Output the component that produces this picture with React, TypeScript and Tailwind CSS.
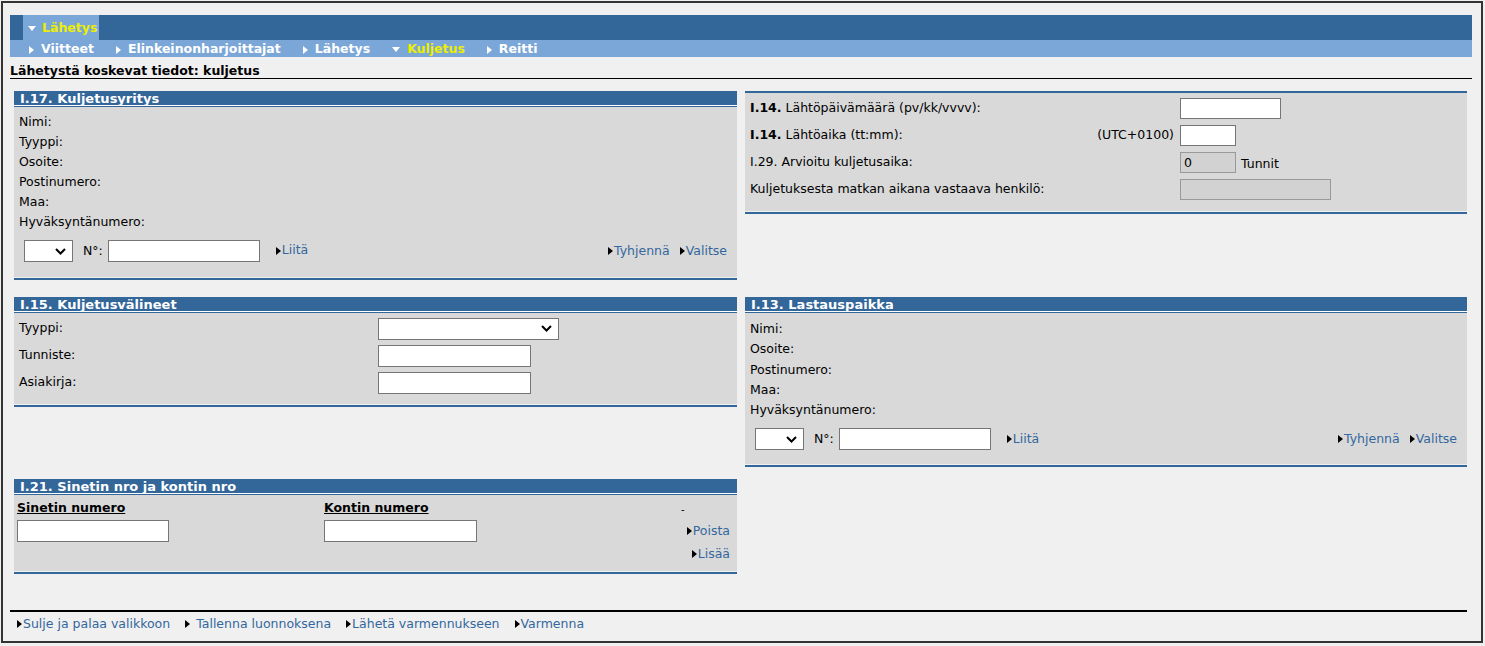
import React from 'react';

const RightTri = ({ className = 'fill-black' }: { className?: string }) => (
  <svg width="5" height="8" viewBox="0 0 5 8" className={className}>
    <path d="M0 0L5 4L0 8Z" />
  </svg>
);

const NavRightTri = () => (
  <svg width="5" height="8" viewBox="0 0 5 8" className="fill-white">
    <path d="M0 0L5 4L0 8Z" />
  </svg>
);

const NavDownTri = () => (
  <svg width="8" height="5" viewBox="0 0 8 5" className="fill-white">
    <path d="M0 0H8L4 5Z" />
  </svg>
);

const Chevron = () => (
  <svg width="11" height="7" viewBox="0 0 11 7" fill="none" stroke="#000" strokeWidth="2">
    <path d="M1 1L5.5 5.5L10 1" />
  </svg>
);

const Link = ({ children, spaced = false }: { children: React.ReactNode; spaced?: boolean }) => (
  <a className={`inline-flex items-center cursor-pointer text-[#33679d] ${spaced ? 'gap-[6px]' : 'gap-[1px]'}`}>
    <RightTri />
    <span>{children}</span>
  </a>
);

const SelectBox = ({ width }: { width: string }) => (
  <div className={`${width} h-[22px] border border-[#767676] bg-white flex items-center justify-end pr-[6px]`}>
    <Chevron />
  </div>
);

const SectionHeader = ({ title }: { title: string }) => (
  <div>
    <div className="h-[14px] bg-[#336699] pl-[6px] text-white font-bold text-[13px] leading-[15px]">{title}</div>
    <div className="h-px bg-white" />
    <div className="h-px bg-[#336699]" />
  </div>
);

const SectionBottom = () => (
  <div>
    <div className="h-px bg-[#f0f0f0]" />
    <div className="h-[2px] bg-[#336699]" />
  </div>
);

const PartyFooterRow = () => (
  <div className="mt-[8px] h-[22px] flex items-center pl-[10px] pr-[10px]">
    <SelectBox width="w-[49px]" />
    <span className="ml-[10px]">N°:</span>
    <input className="ml-[5px] w-[152px] h-[22px] border border-[#767676] bg-white" />
    <span className="ml-[16px]">
      <Link>Liitä</Link>
    </span>
    <div className="ml-auto flex gap-[10px]">
      <Link>Tyhjennä</Link>
      <Link>Valitse</Link>
    </div>
  </div>
);

const navItems = [
  { label: 'Viitteet', active: false },
  { label: 'Elinkeinonharjoittajat', active: false },
  { label: 'Lähetys', active: false },
  { label: 'Kuljetus', active: true },
  { label: 'Reitti', active: false },
];

export default function App() {
  return (
    <div className="min-h-screen bg-[#f0f0f0] pt-px pl-px font-['DejaVu_Sans',sans-serif] text-[12.5px] text-black">
      <div className="w-[1482px] h-[642px] border-2 border-[#333333] pl-[7px] pr-[9px] pt-[12px]">
        {/* top tab bar */}
        <div className="h-[25px] bg-[#336699] flex">
          <div className="ml-[13px] w-[76px] bg-[#7aa7d7] flex items-center pl-[5px] pt-[2px] gap-[6px]">
            <NavDownTri />
            <span className="font-bold text-[#eeee00] text-[12.5px]">Lähetys</span>
          </div>
        </div>
        {/* sub navigation */}
        <div className="h-[17px] bg-[#7aa7d7] flex items-center pl-[19px] pt-[2px] gap-[22px]">
          {navItems.map((item) => (
            <div key={item.label} className="flex items-center gap-[7px]">
              {item.active ? <NavDownTri /> : <NavRightTri />}
              <span className={`font-bold text-[12.5px] ${item.active ? 'text-[#eeee00]' : 'text-white'}`}>{item.label}</span>
            </div>
          ))}
        </div>
        {/* page title */}
        <div className="pt-[6px] leading-[15px] font-bold text-[12.5px] border-b border-black">
          Lähetystä koskevat tiedot: kuljetus
        </div>

        <div className="grid grid-cols-[723px_722px] gap-x-[8px] items-start ml-[4px] mt-[12px]">
          {/* I.17 */}
          <div>
            <SectionHeader title="I.17. Kuljetusyritys" />
            <div className="bg-[#d9d9d9] pt-[5px] pb-[15px]">
              <div className="pl-[5px] leading-[20px]">
                <div>Nimi:</div>
                <div>Tyyppi:</div>
                <div>Osoite:</div>
                <div>Postinumero:</div>
                <div>Maa:</div>
                <div>Hyväksyntänumero:</div>
              </div>
              <PartyFooterRow />
            </div>
            <SectionBottom />
          </div>

          {/* I.14 */}
          <div>
            <div className="h-[2px] bg-[#336699]" />
            <div className="bg-[#d9d9d9] pt-[2px] pb-[8px]">
              <div className="h-[27px] flex items-center">
                <div className="w-[435px] pl-[5px]">
                  <b>I.14.</b> Lähtöpäivämäärä (pv/kk/vvvv):
                </div>
                <input className="w-[101px] h-[21px] border border-[#767676] bg-white" />
              </div>
              <div className="h-[27px] flex items-center">
                <div className="w-[435px] pl-[5px] pr-[6px] flex justify-between">
                  <span>
                    <b>I.14.</b> Lähtöaika (tt:mm):
                  </span>
                  <span>(UTC+0100)</span>
                </div>
                <input className="w-[56px] h-[21px] border border-[#767676] bg-white" />
              </div>
              <div className="h-[27px] flex items-center">
                <div className="w-[435px] pl-[5px]">I.29. Arvioitu kuljetusaika:</div>
                <div className="w-[56px] h-[21px] border border-[#999999] bg-[#d2d2d2] pl-[3px] leading-[19px]">0</div>
                <span className="ml-[5px] pt-[4px]">Tunnit</span>
              </div>
              <div className="h-[27px] flex items-center">
                <div className="w-[435px] pl-[5px]">Kuljetuksesta matkan aikana vastaava henkilö:</div>
                <div className="w-[151px] h-[21px] border border-[#999999] bg-[#d2d2d2]" />
              </div>
            </div>
            <SectionBottom />
          </div>

          {/* I.15 */}
          <div className="mt-[17px]">
            <SectionHeader title="I.15. Kuljetusvälineet" />
            <div className="bg-[#d9d9d9] pt-[2px] pb-[8px]">
              <div className="h-[27px] flex items-center">
                <div className="w-[364px] pl-[5px]">Tyyppi:</div>
                <SelectBox width="w-[181px]" />
              </div>
              <div className="h-[27px] flex items-center">
                <div className="w-[364px] pl-[5px]">Tunniste:</div>
                <input className="w-[153px] h-[22px] border border-[#767676] bg-white" />
              </div>
              <div className="h-[27px] flex items-center">
                <div className="w-[364px] pl-[5px]">Asiakirja:</div>
                <input className="w-[153px] h-[22px] border border-[#767676] bg-white" />
              </div>
            </div>
            <SectionBottom />
          </div>

          {/* I.13 */}
          <div className="mt-[17px]">
            <SectionHeader title="I.13. Lastauspaikka" />
            <div className="bg-[#d9d9d9] pt-[6px] pb-[14px]">
              <div className="pl-[5px] leading-[20.3px]">
                <div>Nimi:</div>
                <div>Osoite:</div>
                <div>Postinumero:</div>
                <div>Maa:</div>
                <div>Hyväksyntänumero:</div>
              </div>
              <div className="mt-[2px]">
                <PartyFooterRow />
              </div>
            </div>
            <SectionBottom />
          </div>

          {/* I.21 */}
          <div className="mt-[12px]">
            <SectionHeader title="I.21. Sinetin nro ja kontin nro" />
            <div className="bg-[#d9d9d9] flex pb-[6px]">
              <div className="w-[310px] pl-[3px] pt-[4px]">
                <div className="font-bold underline leading-[18px] text-[12.5px]">Sinetin numero</div>
                <input className="mt-[3px] w-[152px] h-[22px] border border-[#767676] bg-white" />
              </div>
              <div className="pt-[4px]">
                <div className="font-bold underline leading-[18px] text-[12.5px]">Kontin numero</div>
                <input className="mt-[3px] w-[153px] h-[22px] border border-[#767676] bg-white" />
              </div>
              <div className="ml-auto mr-[7px] w-[49px] flex flex-col items-end leading-[23px]">
                <div className="self-start h-[24px] pt-[10px] leading-[10px] text-[10px]">-</div>
                <Link>Poista</Link>
                <Link>Lisää</Link>
              </div>
            </div>
            <SectionBottom />
          </div>
        </div>

        {/* footer actions */}
        <div className="mt-[36px] mr-[5px] border-t-2 border-black h-[24px] pt-[2px] flex items-center pl-[7px] gap-[15px]">
          <Link>Sulje ja palaa valikkoon</Link>
          <Link spaced>Tallenna luonnoksena</Link>
          <Link>Lähetä varmennukseen</Link>
          <Link>Varmenna</Link>
        </div>
      </div>
    </div>
  );
}
